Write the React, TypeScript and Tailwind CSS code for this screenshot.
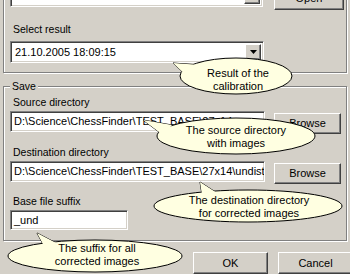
import React from "react";

// Classic Win9x/2000 look: sunken fields, raised buttons, etched frames.
const sunken =
  "bg-white border border-t-[#808080] border-l-[#808080] border-b-white border-r-white shadow-[inset_1px_1px_0_#404040,inset_-1px_-1px_0_#d4d0c8]";
const raised =
  "bg-[#d4d0c8] border border-t-white border-l-white border-b-[#404040] border-r-[#404040] shadow-[inset_-1px_-1px_0_#808080]";
const etched = "border border-[#808080] shadow-[1px_1px_0_#ffffff,inset_1px_1px_0_#ffffff]";

function Label({ children, className = "" }: { children: React.ReactNode; className?: string }) {
  return <div className={`h-[13px] leading-[13px] pl-[9px] ${className}`}>{children}</div>;
}

function Edit({ value, className = "" }: { value: string; className?: string }) {
  return (
    <div className={`${sunken} flex items-center pl-[3px] overflow-hidden whitespace-nowrap text-[11px] ${className}`}>
      {value}
    </div>
  );
}

function Combo({ value, className = "" }: { value: string; className?: string }) {
  return (
    <div className={`${sunken} flex items-center p-[2px] ${className}`}>
      <div className="flex-1 pl-[2px] overflow-hidden whitespace-nowrap text-[11px]">{value}</div>
      <div className={`${raised} w-[16px] h-full flex items-center justify-center`}>
        <svg width="7" height="4" viewBox="0 0 7 4">
          <path d="M0 0h7L3.5 4z" fill="#000" />
        </svg>
      </div>
    </div>
  );
}

function Button({ children, className = "" }: { children: React.ReactNode; className?: string }) {
  return <div className={`${raised} flex items-center justify-center shrink-0 ${className}`}>{children}</div>;
}

type Balloon = {
  cx: number;
  cy: number;
  rx: number;
  ry: number;
  tail: [number, number][];
  lines: string[];
  textTop: number;
  textCx: number;
};

const BALLOONS: Balloon[] = [
  {
    cx: 236, cy: 76, rx: 56, ry: 18,
    tail: [[173, 63], [200, 65], [187, 76]],
    lines: ["Result of the", "calibration"],
    textTop: 67, textCx: 238,
  },
  {
    cx: 236, cy: 136, rx: 79, ry: 18,
    tail: [[143, 120], [172, 125], [163, 135]],
    lines: ["The source directory", "with images"],
    textTop: 124, textCx: 236,
  },
  {
    cx: 248, cy: 206, rx: 94, ry: 16,
    tail: [[200, 182], [202, 195], [217, 193]],
    lines: ["The destination directory", "for corrected images"],
    textTop: 194, textCx: 249,
  },
  {
    cx: 95, cy: 256, rx: 87, ry: 16,
    tail: [[37, 233], [45, 248], [62, 246]],
    lines: ["The suffix for all", "corrected images"],
    textTop: 242, textCx: 97,
  },
];

function Balloons() {
  return (
    <>
      <svg className="absolute inset-0 pointer-events-none" width="350" height="274">
        {BALLOONS.map((b, i) => {
          const pts = b.tail.map((p) => p.join(",")).join(" ");
          return (
            <g key={i}>
              <polygon points={pts} fill="#ffffe1" stroke="#000" strokeWidth="1" />
              <ellipse cx={b.cx} cy={b.cy} rx={b.rx} ry={b.ry} fill="#ffffe1" stroke="#000" strokeWidth="1" />
              <polygon points={pts} fill="#ffffe1" />
            </g>
          );
        })}
      </svg>
      {BALLOONS.map((b, i) => (
        <div
          key={i}
          className="absolute w-[170px] text-center leading-[13px] text-[11px]"
          style={{ left: b.textCx - 85, top: b.textTop }}
        >
          {b.lines.map((l) => (
            <div key={l}>{l}</div>
          ))}
        </div>
      ))}
    </>
  );
}

export default function App() {
  return (
    <div className="relative w-[350px] h-[274px] overflow-hidden bg-[#d4d0c8] text-black text-[10.5px] font-['Liberation_Sans',Arial,sans-serif]">
      {/* load group, top cut off by the window */}
      <div className={`${etched} mx-[3px] -mt-[40px] pl-[6px] pr-[2px] pt-[25px] pb-[9px]`}>
        <div className="flex items-start">
          <Combo value="results" className="w-[254px] h-[21px]" />
          <Button className="ml-[11px] w-[70px] h-[23px] mt-[1px] text-[11px]">Open</Button>
        </div>
        <Label className="mt-[13px] -ml-[6px] pl-[9px]">Select result</Label>
        <Combo value="21.10.2005 18:09:15" className="mt-[5px] w-[254px] h-[22px]" />
      </div>

      {/* save group */}
      <div className={`${etched} relative mx-[3px] mt-[13px] pl-[6px] pb-[10px]`}>
        <div className="absolute -top-[7px] left-[6px] px-[2px] bg-[#d4d0c8] leading-[13px]">Save</div>
        <Label className="mt-[9px] -ml-[6px]">Source directory</Label>
        <div className="flex items-start mt-[2px]">
          <Edit value="D:\Science\ChessFinder\TEST_BASE\27x14" className="w-[255px] h-[21px]" />
          <Button className="ml-[9px] mt-[2px] w-[67px] h-[21px] text-[11px]">Browse</Button>
        </div>
        <Label className="mt-[12px] -ml-[6px]">Destination directory</Label>
        <div className="flex items-start mt-[2px]">
          <Edit value="D:\Science\ChessFinder\TEST_BASE\27x14\undistorted" className="w-[255px] h-[21px]" />
          <Button className="ml-[9px] mt-[2px] w-[67px] h-[21px] text-[11px]">Browse</Button>
        </div>
        <Label className="mt-[11px] -ml-[6px]">Base file suffix</Label>
        <Edit value="_und" className="mt-[2px] w-[118px] h-[20px]" />
      </div>

      <div className="flex mt-[11px] pl-[193px] gap-[10px] text-[11px]">
        <Button className="w-[75px] h-[22px]">OK</Button>
        <Button className="w-[75px] h-[22px]">Cancel</Button>
      </div>

      <Balloons />
    </div>
  );
}
